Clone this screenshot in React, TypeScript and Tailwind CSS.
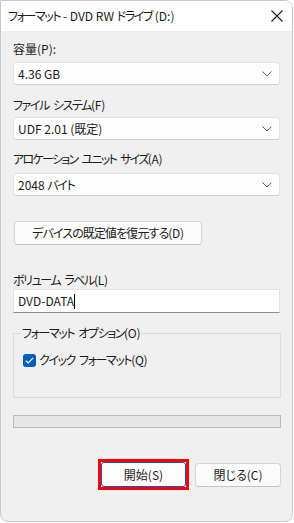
import React from "react";

const J = ({ t, tr = "tracking-[-1.4px]" }: { t: string; tr?: string }) => {
  const words = t.split(" ");
  return (
    <>
      {words.map((w, i) => {
        const m = w.match(/^(.*?)(\(.*\):?)?$/);
        const main = m ? m[1] : w;
        const paren = m && m[2] ? m[2] : "";
        return (
          <React.Fragment key={i}>
            {i > 0 && <span className="inline-block w-[4px]"></span>}
            <span className={tr}>{main}</span>
            {paren && <span className="tracking-[-0.3px]">{paren}</span>}
          </React.Fragment>
        );
      })}
    </>
  );
};

const Chevron = () => (
  <svg width="10" height="6" viewBox="0 0 10 6" className="shrink-0">
    <path d="M0.5 0.5 L5 5 L9.5 0.5" fill="none" stroke="#606060" strokeWidth="1" />
  </svg>
);

const Combo = ({ children, mt }: { children: React.ReactNode; mt: string }) => (
  <div
    className={`${mt} h-[23px] flex items-center justify-between pl-[4px] pr-[7px] bg-[#fdfdfd] border border-[#e3e3e3] border-b-[#d0d0d0] rounded-[3px]`}
  >
    <span>{children}</span>
    <Chevron />
  </div>
);

export default function App() {
  return (
    <div className="w-[294px] h-[523px] bg-white text-[12px] leading-[16px] text-[#1b1b1b] [font-family:'Noto_Sans_CJK_JP',sans-serif] [font-feature-settings:'palt']">
      <div className="w-[293px] h-[522px] border border-[#c9c9c9] rounded-[8px] rounded-tl-none overflow-hidden flex flex-col bg-[#f0f0f0]">
        <div className="h-[30px] shrink-0 bg-white flex items-center justify-between pl-[7px] pr-[9px]">
          <span>
            <span className="tracking-[-1.4px]">フォーマット</span> - DVD RW{" "}
            <span className="tracking-[-1.4px]">ドライブ</span> (D:)
          </span>
          <svg width="12" height="12" viewBox="0 0 12 12">
            <path d="M0.5 0.5 L11.5 11.5 M11.5 0.5 L0.5 11.5" stroke="#1b1b1b" strokeWidth="1.1" />
          </svg>
        </div>
        <div className="flex flex-col px-[12px]">
          <div className="mt-[10px] h-[16px]">容量(P):</div>
          <Combo mt="mt-[5px]">4.36 GB</Combo>
          <div className="mt-[12px] h-[16px] whitespace-nowrap">
            <J t="ファイル システム(F)" />
          </div>
          <Combo mt="mt-[4px]">UDF 2.01 (既定)</Combo>
          <div className="mt-[11px] h-[16px] whitespace-nowrap">
            <J t="アロケーション ユニット サイズ(A)" tr="tracking-[-1.7px]" />
          </div>
          <Combo mt="mt-[6px]">
            2048 <span className="tracking-[-1.4px]">バイト</span>
          </Combo>
          <div className="mt-[25px] ml-[1px] w-[188px] h-[24px] flex items-center justify-center bg-[#fbfbfb] border border-[#d6d6d6] border-b-[#c2c2c2] rounded-[4px]">
            <J t="デバイスの既定値を復元する(D)" tr="tracking-[-0.9px]" />
          </div>
          <div className="mt-[27px] h-[16px] whitespace-nowrap">
            <J t="ボリューム ラベル(L)" />
          </div>
          <div className="mt-[1px] h-[24px] flex items-center pl-[4px] bg-white border border-[#e3e3e3] border-b-[#8a8a8a]">
            <span>DVD-DATA</span>
            <span className="w-[1px] h-[15px] bg-black"></span>
          </div>
          <div className="relative mt-[20px] mr-[-1px] h-[65px] border border-[#dcdcdc]">
            <span className="absolute left-[7px] top-[-9px] px-[1px] bg-[#f0f0f0] whitespace-nowrap">
              <J t="フォーマット オプション(O)" />
            </span>
            <div className="mt-[18px] ml-[9px] flex items-center gap-[3px]">
              <span className="w-[13px] h-[13px] rounded-[3px] bg-[#005fb8] flex items-center justify-center">
                <svg width="9" height="7" viewBox="0 0 9 7">
                  <path d="M0.8 3.6 L3.2 5.9 L8.2 0.9" fill="none" stroke="white" strokeWidth="1.2" />
                </svg>
              </span>
              <span className="whitespace-nowrap">
                <J t="クイック フォーマット(Q)" />
              </span>
            </div>
          </div>
          <div className="mt-[17px] mr-[-1px] h-[13px] bg-[#e6e6e6] border border-[#bcbcbc]"></div>
          <div className="mt-[31px] flex items-center justify-end gap-[6px] mr-[-1px]">
            <div className="w-[91px] h-[31px] border-[3px] border-[#ff0000] flex">
              <div className="flex-1 flex items-center justify-center bg-[#fdfdfd] border border-[#005fb8] rounded-[3px]">
                開始(S)
              </div>
            </div>
            <div className="w-[86px] h-[24px] flex items-center justify-center bg-[#fbfbfb] border border-[#d6d6d6] border-b-[#c2c2c2] rounded-[4px]">
              閉じる(C)
            </div>
          </div>
        </div>
      </div>
    </div>
  );
}
